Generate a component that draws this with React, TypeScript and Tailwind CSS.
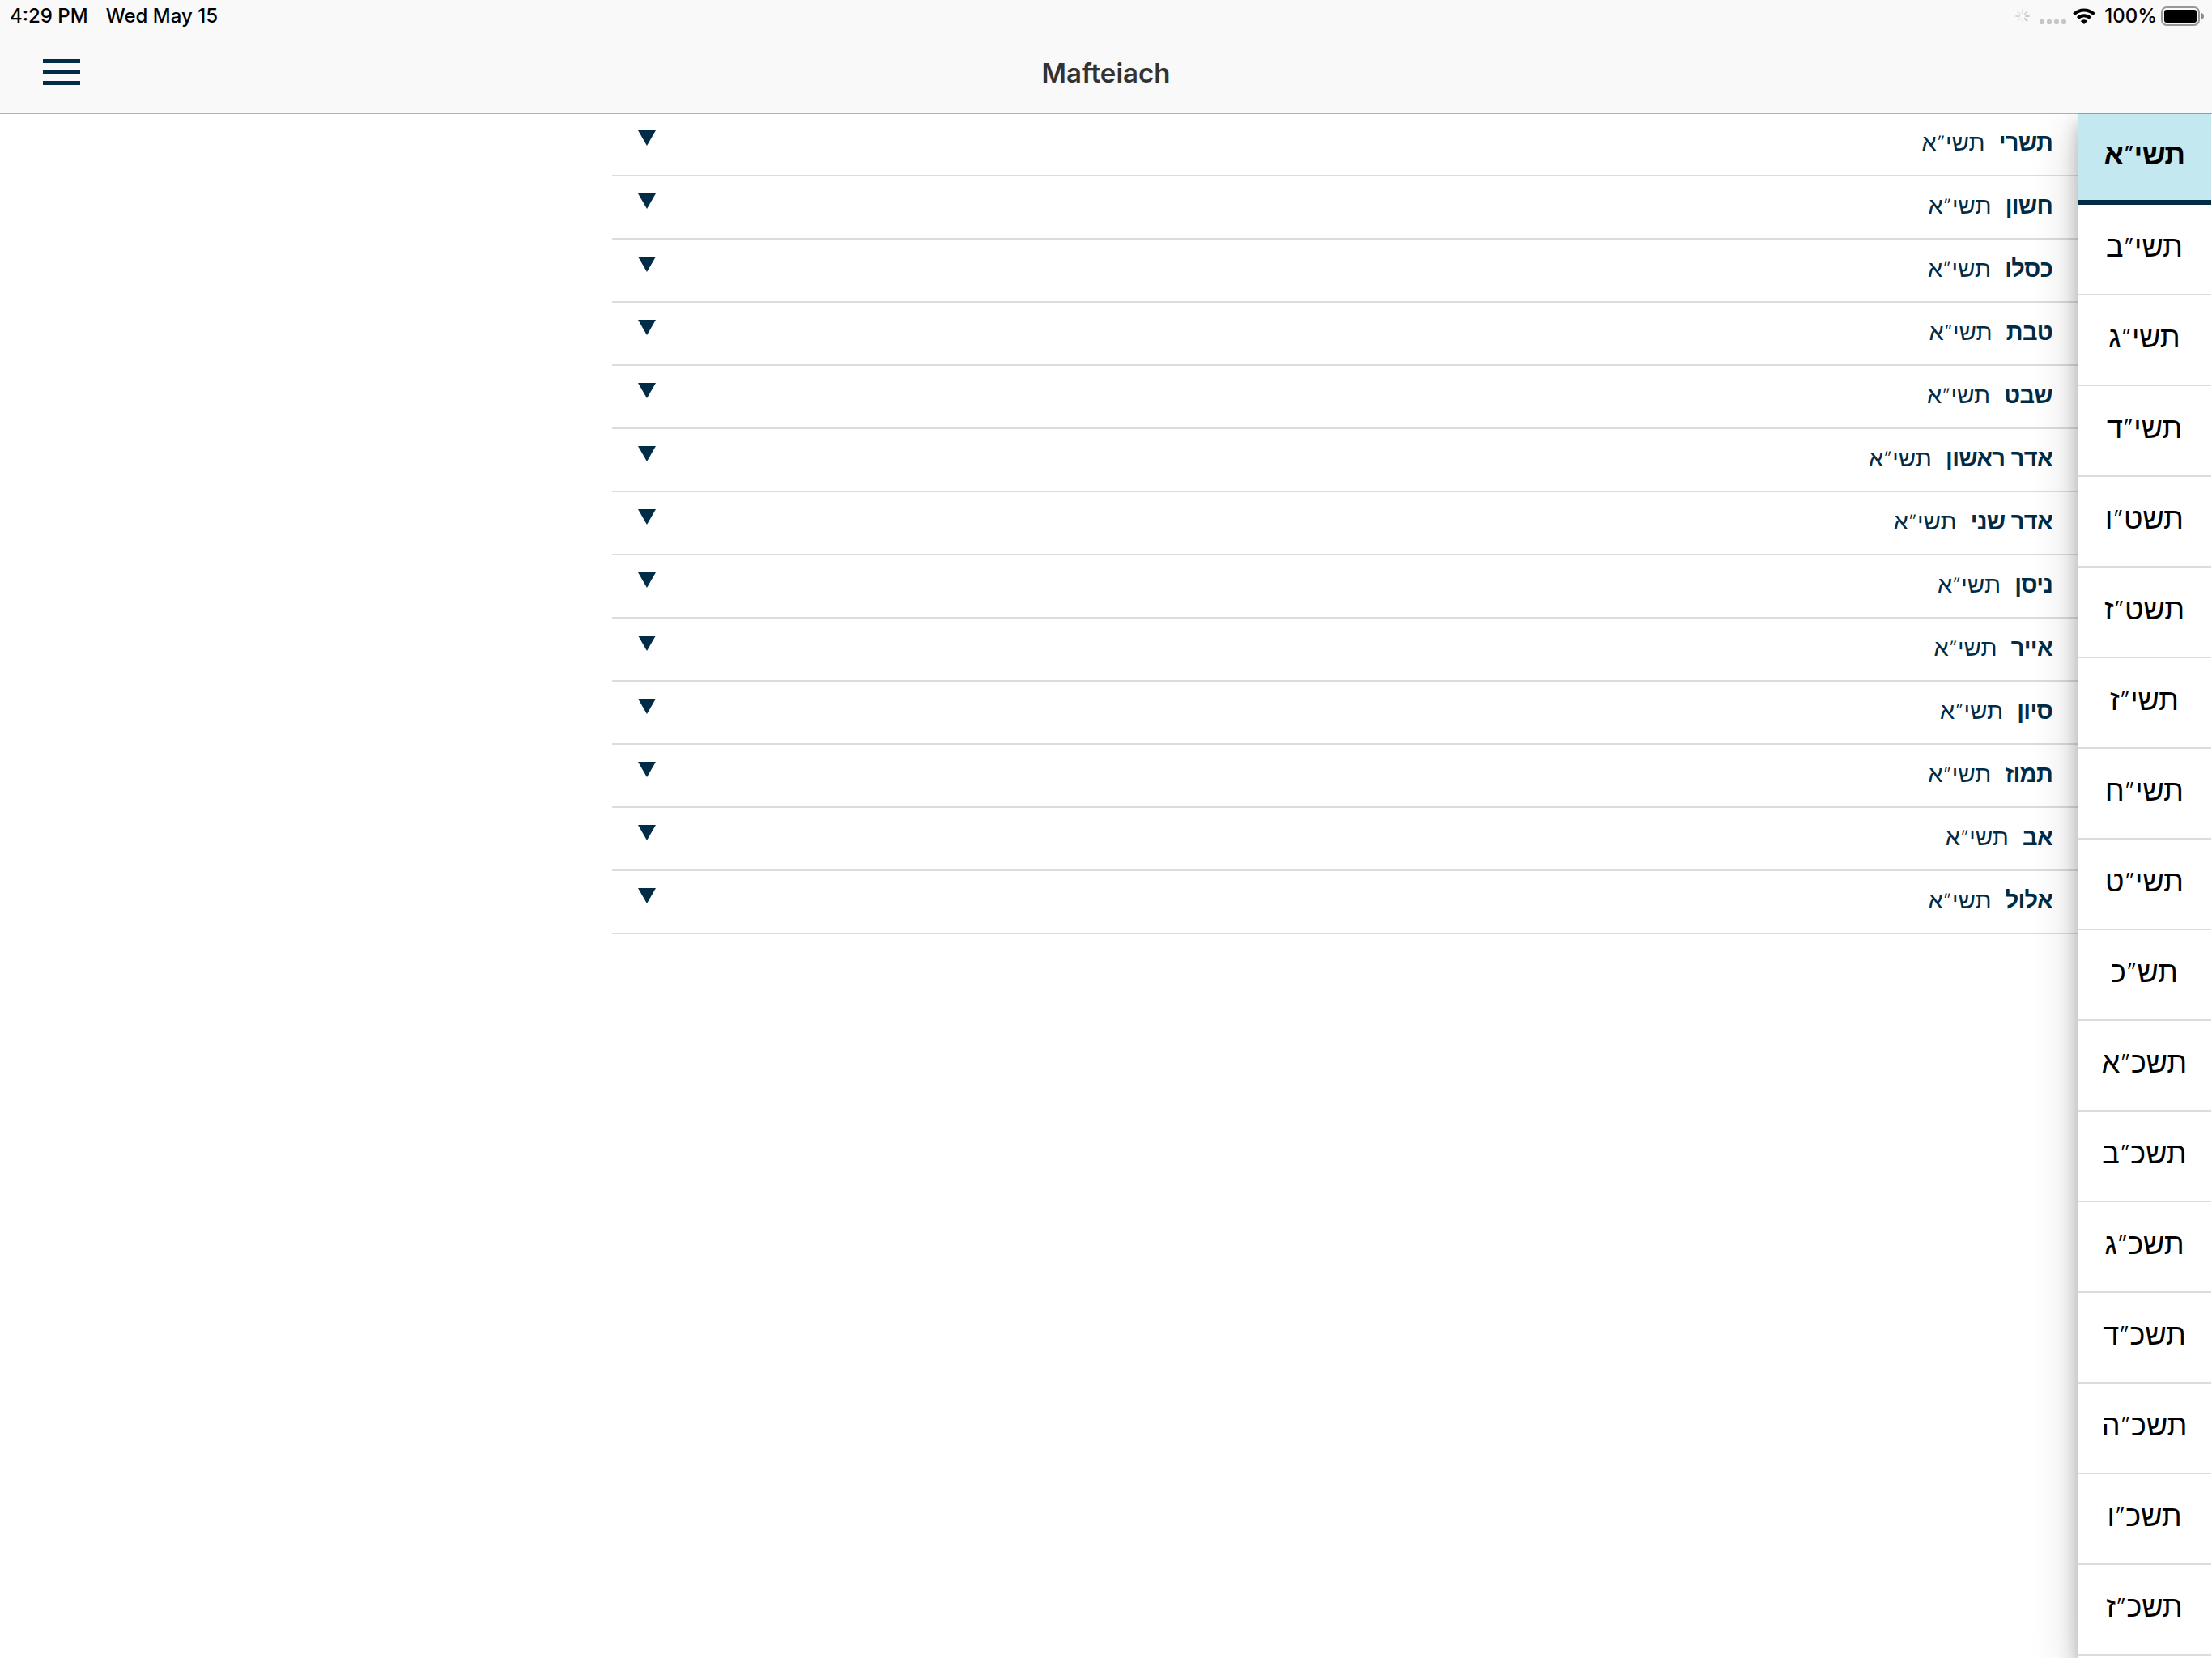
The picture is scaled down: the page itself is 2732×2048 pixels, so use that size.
import React from 'react';

const months = ['תשרי', 'חשון', 'כסלו', 'טבת', 'שבט', 'אדר ראשון', 'אדר שני', 'ניסן', 'אייר', 'סיון', 'תמוז', 'אב', 'אלול'];
const years = ['תשי״א', 'תשי״ב', 'תשי״ג', 'תשי״ד', 'תשט״ו', 'תשט״ז', 'תשי״ז', 'תשי״ח', 'תשי״ט', 'תש״כ', 'תשכ״א', 'תשכ״ב', 'תשכ״ג', 'תשכ״ד', 'תשכ״ה', 'תשכ״ו', 'תשכ״ז'];

/** A Hebrew year with its gershayim set smaller than the letters. */
function Year({ value }: { value: string }) {
  const [head, tail] = value.split('״');
  return (
    <>
      {head}
      <span className="relative -top-[0.24em] text-[0.62em] leading-none">״</span>
      {tail}
    </>
  );
}

function Spinner() {
  const shades = ['#dedede', '#d2d2d2', '#c9c9c9', '#bdbdbd', '#ededed', '#e6e6e6', '#d6d6d6', '#e6e6e6'];
  return (
    <svg viewBox="-10 -10 20 20" className="size-5">
      {shades.map((s, i) => (
        <line key={i} x1="0" y1="-4" x2="0" y2="-8" stroke={s} strokeWidth="1.8" strokeLinecap="round" transform={`rotate(${i * 45})`} />
      ))}
    </svg>
  );
}

function Wifi() {
  return (
    <svg viewBox="0 0 28 20" className="h-5 w-7">
      <g fill="none" stroke="#000" strokeWidth="4">
        <path d="M1.5 7.6 A17.8 17.8 0 0 1 26.5 7.6" />
        <path d="M6.3 12.4 A11 11 0 0 1 21.7 12.4" />
      </g>
      <path d="M9.7 16 A6.2 6.2 0 0 1 18.3 16 L14 20 Z" fill="#000" />
    </svg>
  );
}

function Battery() {
  return (
    <svg viewBox="0 0 54 24" className="h-6 w-[54px]">
      <rect x="1" y="1" width="46" height="22" rx="6" fill="none" stroke="#989898" strokeWidth="2" />
      <rect x="4" y="4" width="40" height="16" rx="3" fill="#000" />
      <path d="M50 8 C52 8.6 53 10 53 12 C53 14 52 15.4 50 16 Z" fill="#8c8c8c" />
    </svg>
  );
}

function Header() {
  return (
    <header className="relative z-10 flex h-[140px] flex-col bg-[#f9f9f9] font-['Inter',sans-serif] shadow-[0_1px_0_rgba(0,0,0,0.3)]">
      <div className="flex h-10 items-center justify-between pr-[9px] pl-3 text-[24px] leading-10 font-medium text-black">
        <div className="flex gap-[22px]">
          <span>4:29 PM</span>
          <span>Wed May 15</span>
        </div>
        <div className="flex items-center">
          <Spinner />
          <span className="mt-3.5 ml-[11px] flex gap-[3px]">
            {[0, 1, 2, 3].map((i) => (
              <i key={i} className="size-1.5 rounded-[2px] bg-[#c6c6c6]" />
            ))}
          </span>
          <span className="ml-2"><Wifi /></span>
          <span className="ml-[11px]">100%</span>
          <span className="ml-[5px]"><Battery /></span>
        </div>
      </div>
      <div className="grid flex-1 grid-cols-3 items-center px-[53px]">
        <svg viewBox="0 0 46 32" className="-mt-0.5 h-8 w-[46px]">
          <path d="M0 0h46v5H0zM0 13.5h46v5H0zM0 27h46v5H0z" fill="#002c47" />
        </svg>
        <h1 className="text-center text-[33px] leading-10 font-semibold text-[#333]">Mafteiach</h1>
      </div>
    </header>
  );
}

function Months() {
  return (
    <ul dir="rtl" className="w-[1810px] text-[#002c47]">
      {months.map((m) => (
        <li key={m} className="flex h-[78px] items-start justify-between border-b-2 border-[#dcdcdc] pr-[31px] pl-8">
          <span className="flex gap-[17px] text-[29px] leading-[72px]">
            <b className="tracking-[-0.7px]">{m}</b>
            <span className="tracking-[0.2px]"><Year value="תשי״א" /></span>
          </span>
          <svg viewBox="0 0 22 19" className="mt-[21px] h-[19px] w-[22px]">
            <path d="M0 0H22L11 19Z" fill="#002c47" />
          </svg>
        </li>
      ))}
    </ul>
  );
}

function Years() {
  return (
    <ul dir="rtl" className="relative w-[165px] bg-white text-center text-[36px] shadow-[0_20px_60px_rgba(0,0,0,0.19),0_12px_20px_rgba(0,0,0,0.23)]">
      {years.map((y, i) => (
        <li
          key={y}
          className={
            i === 0
              ? 'h-[113px] border-b-[6px] border-[#002c47] bg-[#c3e8f0] leading-[102px] font-bold tracking-[-0.7px]'
              : 'h-[112px] border-b-2 border-[#dcdcdc] leading-[104px]'
          }
        >
          <Year value={y} />
        </li>
      ))}
    </ul>
  );
}

export default function App() {
  return (
    <div className="flex h-[2048px] w-[2732px] flex-col overflow-hidden bg-white font-['Liberation_Sans',sans-serif]">
      <Header />
      <main className="flex min-h-0 flex-1 justify-end">
        <Months />
        <Years />
        <div className="relative w-px bg-white" />
      </main>
    </div>
  );
}
